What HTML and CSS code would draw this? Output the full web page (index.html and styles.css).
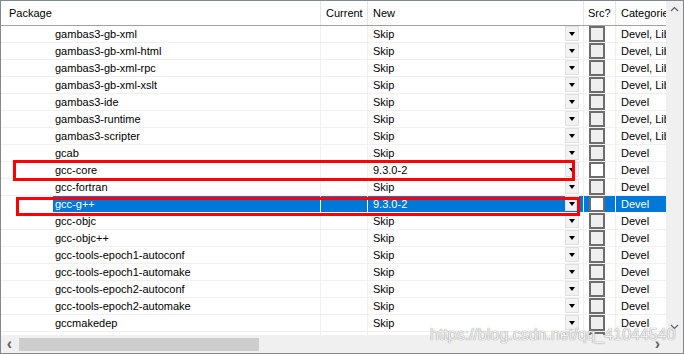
FILE: index.html
```html
<!DOCTYPE html>
<html>
<head>
    <meta charset="utf-8" />
    <title>Select Packages</title>
    <link rel="stylesheet" href="styles.css">
</head>
<body>
    <div class="window">
        <div class="list">
            <div class="head">
                <div class="cell c-pkg">Package</div>
                <div class="cell c-cur">Current</div>
                <div class="cell c-new">New</div>
                <div class="cell c-src">Src?</div>
                <div class="cell c-cat">Categories</div>
            </div>
            <div class="rows">
                <div class="row"><div class="cell c-pkg">gambas3-gb-xml</div><div class="cell c-cur"></div><div class="cell c-new">Skip<span class="drop"></span></div><div class="cell c-src"><span class="chk"></span></div><div class="cell c-cat">Devel, Libs</div></div>
                <div class="row"><div class="cell c-pkg">gambas3-gb-xml-html</div><div class="cell c-cur"></div><div class="cell c-new">Skip<span class="drop"></span></div><div class="cell c-src"><span class="chk"></span></div><div class="cell c-cat">Devel, Libs</div></div>
                <div class="row"><div class="cell c-pkg">gambas3-gb-xml-rpc</div><div class="cell c-cur"></div><div class="cell c-new">Skip<span class="drop"></span></div><div class="cell c-src"><span class="chk"></span></div><div class="cell c-cat">Devel, Libs</div></div>
                <div class="row"><div class="cell c-pkg">gambas3-gb-xml-xslt</div><div class="cell c-cur"></div><div class="cell c-new">Skip<span class="drop"></span></div><div class="cell c-src"><span class="chk"></span></div><div class="cell c-cat">Devel, Libs</div></div>
                <div class="row"><div class="cell c-pkg">gambas3-ide</div><div class="cell c-cur"></div><div class="cell c-new">Skip<span class="drop"></span></div><div class="cell c-src"><span class="chk"></span></div><div class="cell c-cat">Devel</div></div>
                <div class="row"><div class="cell c-pkg">gambas3-runtime</div><div class="cell c-cur"></div><div class="cell c-new">Skip<span class="drop"></span></div><div class="cell c-src"><span class="chk"></span></div><div class="cell c-cat">Devel, Libs</div></div>
                <div class="row"><div class="cell c-pkg">gambas3-scripter</div><div class="cell c-cur"></div><div class="cell c-new">Skip<span class="drop"></span></div><div class="cell c-src"><span class="chk"></span></div><div class="cell c-cat">Devel, Libs</div></div>
                <div class="row"><div class="cell c-pkg">gcab</div><div class="cell c-cur"></div><div class="cell c-new">Skip<span class="drop"></span></div><div class="cell c-src"><span class="chk"></span></div><div class="cell c-cat">Devel</div></div>
                <div class="row"><div class="cell c-pkg">gcc-core</div><div class="cell c-cur"></div><div class="cell c-new">9.3.0-2<span class="drop"></span></div><div class="cell c-src"><span class="chk on"></span></div><div class="cell c-cat">Devel</div></div>
                <div class="row"><div class="cell c-pkg">gcc-fortran</div><div class="cell c-cur"></div><div class="cell c-new">Skip<span class="drop"></span></div><div class="cell c-src"><span class="chk"></span></div><div class="cell c-cat">Devel</div></div>
                <div class="row sel"><div class="cell c-pkg"><span class="name">gcc-g++</span></div><div class="cell c-cur"></div><div class="cell c-new">9.3.0-2<span class="drop"></span></div><div class="cell c-src"><span class="chk on"></span></div><div class="cell c-cat">Devel</div></div>
                <div class="row"><div class="cell c-pkg">gcc-objc</div><div class="cell c-cur"></div><div class="cell c-new">Skip<span class="drop"></span></div><div class="cell c-src"><span class="chk"></span></div><div class="cell c-cat">Devel</div></div>
                <div class="row"><div class="cell c-pkg">gcc-objc++</div><div class="cell c-cur"></div><div class="cell c-new">Skip<span class="drop"></span></div><div class="cell c-src"><span class="chk"></span></div><div class="cell c-cat">Devel</div></div>
                <div class="row"><div class="cell c-pkg">gcc-tools-epoch1-autoconf</div><div class="cell c-cur"></div><div class="cell c-new">Skip<span class="drop"></span></div><div class="cell c-src"><span class="chk"></span></div><div class="cell c-cat">Devel</div></div>
                <div class="row"><div class="cell c-pkg">gcc-tools-epoch1-automake</div><div class="cell c-cur"></div><div class="cell c-new">Skip<span class="drop"></span></div><div class="cell c-src"><span class="chk"></span></div><div class="cell c-cat">Devel</div></div>
                <div class="row"><div class="cell c-pkg">gcc-tools-epoch2-autoconf</div><div class="cell c-cur"></div><div class="cell c-new">Skip<span class="drop"></span></div><div class="cell c-src"><span class="chk"></span></div><div class="cell c-cat">Devel</div></div>
                <div class="row"><div class="cell c-pkg">gcc-tools-epoch2-automake</div><div class="cell c-cur"></div><div class="cell c-new">Skip<span class="drop"></span></div><div class="cell c-src"><span class="chk"></span></div><div class="cell c-cat">Devel</div></div>
                <div class="row"><div class="cell c-pkg">gccmakedep</div><div class="cell c-cur"></div><div class="cell c-new">Skip<span class="drop"></span></div><div class="cell c-src"><span class="chk"></span></div><div class="cell c-cat">Devel</div></div>
                <div class="row"><div class="cell c-pkg">gccxml</div><div class="cell c-cur"></div><div class="cell c-new">Skip<span class="drop"></span></div><div class="cell c-src"><span class="chk"></span></div><div class="cell c-cat">Devel</div></div>
            </div>
            <div class="hscroll">
                <span class="arrow">&#8249;</span>
                <div class="track"><div class="thumb"></div></div>
                <span class="arrow">&#8250;</span>
            </div>
        </div>
        <div class="vscroll">
            <svg class="varrow" width="17" height="17" viewBox="0 0 17 17"><path d="M5 10 L8.5 6.5 L12 10" fill="none" stroke="#606060" stroke-width="1.2"/></svg>
            <div class="vtrack"></div>
            <svg class="varrow" width="17" height="17" viewBox="0 0 17 17"><path d="M5 7 L8.5 10.5 L12 7" fill="none" stroke="#606060" stroke-width="1.2"/></svg>
            <div class="corner"></div>
        </div>

        <div class="mark mark-core"></div>
        <div class="mark mark-gpp"></div>
        <div class="wm">https://blog.csdn.net/qq_41044540</div>
    </div>
</body>
</html>
```

FILE: styles.css
```css
* {
    margin: 0;
    padding: 0;
    box-sizing: border-box;
}

body {
    background: #fff;
    font-family: "Liberation Sans", Arial, sans-serif;
    font-size: 11px;
    color: #000;
}

.window {
    position: relative;
    width: 684px;
    height: 354px;
    border: 1px solid #828790;
    display: flex;
    overflow: hidden;
}

.list {
    width: 665px;
    display: flex;
    flex-direction: column;
}

.head,
.row {
    display: grid;
    grid-template-columns: 320px 47px 216px 32px 50px;
}

.head {
    height: 25px;
    border-bottom: 1px solid #a0a0a0;
    border-right: 1px solid #a0a0a0;
    width: 666px;
    grid-template-columns: 320px 47px 216px 32px 51px;
}

.head .cell {
    line-height: 24px;
    border-right: 1px solid #e5e5e5;
    padding-left: 5px;
    white-space: nowrap;
    overflow: hidden;
}

.head .c-pkg {
    padding-left: 8px;
}

.head .c-src {
    padding-left: 4px;
}

.head .c-cat {
    border-right: 0;
}

.rows {
    flex: 1;
    overflow: hidden;
}

.row {
    height: 17px;
    border-bottom: 1px solid #f0f0f0;
}

.row .cell {
    position: relative;
    line-height: 16px;
    white-space: nowrap;
    overflow: hidden;
    border-right: 1px solid #f0f0f0;
    padding-left: 5px;
}

.row .c-pkg {
    padding-left: 54px;
}

.row .c-cat {
    border-right: 0;
}

.drop {
    position: absolute;
    right: 4px;
    top: 0;
    width: 14px;
    height: 15px;
    background: #f2f2f2;
    border: 1px solid #e0e0e0;
}

.drop::after {
    content: "";
    position: absolute;
    left: 3px;
    top: 5px;
    border-left: 3.5px solid transparent;
    border-right: 3.5px solid transparent;
    border-top: 4px solid #000;
}

.c-src {
    padding-left: 5px;
}

.chk {
    display: block;
    width: 16px;
    height: 16px;
    border: 2px solid #6d6d6d;
    background: #efefef;
}

.chk.on {
    background: #fff;
}

.row.sel {
    color: #fff;
    border-bottom-color: #fff;
    background-image: linear-gradient(90deg, #4d4d4d 50%, transparent 50%);
    background-size: 2px 1px;
    background-repeat: repeat-x;
}

.row.sel .cell {
    background: #0078d7;
    border-right-color: #fff;
}

.row.sel .c-pkg {
    background: linear-gradient(90deg, #fff 52px, #0078d7 52px);
}

.row.sel .c-new .drop {
    background: #f2f2f2;
}

.hscroll {
    height: 18px;
    display: flex;
    align-items: center;
    background: #f0f0f0;
    color: #606060;
}

.hscroll .arrow {
    width: 17px;
    text-align: center;
    font-size: 16px;
    font-weight: bold;
    line-height: 18px;
}

.track {
    flex: 1;
    height: 13px;
}

.thumb {
    width: 240px;
    height: 13px;
    margin-left: 1px;
    background: #cdcdcd;
}

.vscroll {
    width: 17px;
    display: flex;
    flex-direction: column;
    background: #f0f0f0;
}

.varrow {
    display: block;
}

.vtrack {
    flex: 1;
}

.corner {
    height: 18px;
    background: #f0f0f0;
}

.mark {
    position: absolute;
    border: 3px solid #f00;
}

.mark-core {
    left: 12px;
    top: 159px;
    width: 562px;
    height: 21px;
}

.mark-gpp {
    left: 15px;
    top: 196px;
    width: 564px;
    height: 19px;
}

.wm {
    position: absolute;
    left: 429px;
    top: 325px;
    font-size: 16px;
    color: rgba(255, 255, 255, 0.85);
    text-shadow: 0 0 1px #9a9a9a, 0 0 1px #9a9a9a;
    white-space: nowrap;
}
```
